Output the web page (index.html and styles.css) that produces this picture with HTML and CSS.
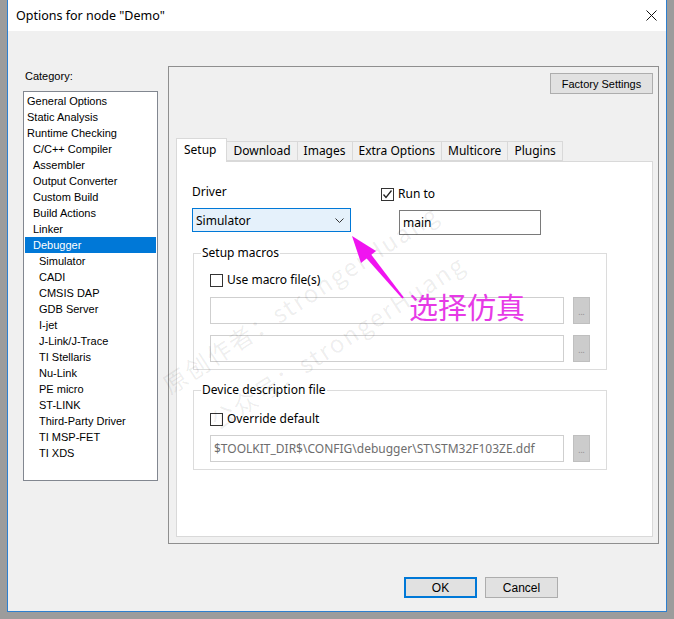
FILE: index.html
```html
<!DOCTYPE html>
<html lang="en">
<head>
  <meta charset="UTF-8" />
  <title>Options for node "Demo"</title>
  <link rel="stylesheet" href="styles.css">
</head>
<body>
  <div class="window">
    <div class="titlebar">
      <span class="title">Options for node "Demo"</span>
      <svg class="close" width="11" height="11" viewBox="0 0 11 11">
        <path d="M0.5 0.5 L10.5 10.5 M10.5 0.5 L0.5 10.5" stroke="#111" stroke-width="1" fill="none"/>
      </svg>
    </div>

    <div class="client">
      <!-- Category list -->
      <div class="category">
        <div class="category-label">Category:</div>
        <ul class="cat-list">
          <li>General Options</li>
          <li>Static Analysis</li>
          <li>Runtime Checking</li>
          <li class="lvl1">C/C++ Compiler</li>
          <li class="lvl1">Assembler</li>
          <li class="lvl1">Output Converter</li>
          <li class="lvl1">Custom Build</li>
          <li class="lvl1">Build Actions</li>
          <li class="lvl1">Linker</li>
          <li class="lvl1 selected">Debugger</li>
          <li class="lvl2">Simulator</li>
          <li class="lvl2">CADI</li>
          <li class="lvl2">CMSIS DAP</li>
          <li class="lvl2">GDB Server</li>
          <li class="lvl2">I-jet</li>
          <li class="lvl2">J-Link/J-Trace</li>
          <li class="lvl2">TI Stellaris</li>
          <li class="lvl2">Nu-Link</li>
          <li class="lvl2">PE micro</li>
          <li class="lvl2">ST-LINK</li>
          <li class="lvl2">Third-Party Driver</li>
          <li class="lvl2">TI MSP-FET</li>
          <li class="lvl2">TI XDS</li>
        </ul>
      </div>

      <div class="main">
        <div class="panel">
          <button class="win-btn factory-btn">Factory Settings</button>

          <div class="tabs">
            <div class="tab active">Setup</div>
            <div class="tab">Download</div>
            <div class="tab">Images</div>
            <div class="tab">Extra Options</div>
            <div class="tab">Multicore</div>
            <div class="tab">Plugins</div>
          </div>

          <div class="tab-page">
            <div class="driver-row">
              <div class="driver-col">
                <div class="field-label">Driver</div>
                <div class="select">
                  <span>Simulator</span>
                  <svg width="9" height="5" viewBox="0 0 9 5">
                    <path d="M0.5 0.5 L4.5 4.5 L8.5 0.5" stroke="#333" stroke-width="1" fill="none"/>
                  </svg>
                </div>
              </div>
              <div class="runto-col">
                <label class="check-row">
                  <span class="checkbox checked">
                    <svg width="11" height="11" viewBox="0 0 11 11">
                      <path d="M1.5 5.5 L4 8.5 L9.5 1.5" stroke="#222" stroke-width="1.3" fill="none"/>
                    </svg>
                  </span>
                  Run to
                </label>
                <div class="textbox">main</div>
              </div>
            </div>

            <fieldset class="group macros">
              <legend>Setup macros</legend>
              <label class="check-row">
                <span class="checkbox"></span>
                Use macro file(s)
              </label>
              <div class="file-row">
                <div class="path-box"></div>
                <div class="dots-btn">...</div>
              </div>
              <div class="file-row">
                <div class="path-box"></div>
                <div class="dots-btn">...</div>
              </div>
            </fieldset>

            <fieldset class="group device">
              <legend>Device description file</legend>
              <label class="check-row">
                <span class="checkbox"></span>
                Override default
              </label>
              <div class="file-row">
                <div class="path-box">$TOOLKIT_DIR$\CONFIG\debugger\ST\STM32F103ZE.ddf</div>
                <div class="dots-btn">...</div>
              </div>
            </fieldset>
          </div>
        </div>

        <div class="dialog-buttons">
          <button class="win-btn default">OK</button>
          <button class="win-btn">Cancel</button>
        </div>
      </div>
    </div>
  </div>

  <!-- screenshot annotations: watermark and arrow -->
  <div class="watermark wm1">原创作者：strongerHuang</div>
  <div class="watermark wm2">公众号：strongerHuang</div>
  <svg class="arrow" width="674" height="619" viewBox="0 0 674 619">
    <polygon points="370.8,254.1 366.2,257.9 402.2,298.6 403.8,297.4" fill="#f014f0"/>
    <polygon points="352,236 376,251 361,263" fill="#f014f0"/>
  </svg>
  <div class="note">选择仿真</div>
</body>
</html>
```

FILE: styles.css
```css
* {
  box-sizing: border-box;
  margin: 0;
  padding: 0;
}

html, body {
  width: 674px;
  height: 619px;
  overflow: hidden;
}

body {
  position: relative;
  background-color: #9c9c9c;
  padding-left: 7px;
  font-family: "Noto Sans", "Open Sans", sans-serif;
  font-size: 12px;
  color: #000;
}

/* Window frame */
.window {
  width: 660px;
  height: 612px;
  border: 1px solid #2d7fcf;
  border-top: none;
  background-color: #f0f0f0;
  display: flex;
  flex-direction: column;
}

.titlebar {
  height: 31px;
  background-color: #fff;
  display: flex;
  align-items: center;
  justify-content: space-between;
  padding: 0 9px 0 8px;
}

.title {
  font-size: 12.5px;
}

.client {
  flex: 1;
  display: flex;
}

/* Category */
.category {
  width: 160px;
  padding: 39px 0 0 15px;
  font-family: "Liberation Sans", Arial, sans-serif;
  font-size: 11px;
}

.category-label {
  line-height: 13px;
  padding-left: 2px;
  margin-bottom: 8px;
}

.cat-list {
  list-style: none;
  width: 135px;
  height: 390px;
  background-color: #fff;
  border: 1px solid #828790;
  padding: 1px;
}

.cat-list li {
  height: 16px;
  line-height: 16px;
  padding-left: 2px;
  white-space: nowrap;
}

.cat-list li.lvl1 { padding-left: 8px; }
.cat-list li.lvl2 { padding-left: 14px; }

.cat-list li.selected {
  background-color: #0078d7;
  color: #fff;
}

/* Right side */
.main {
  flex: 1;
  display: flex;
  flex-direction: column;
}

.panel {
  width: 491px;
  height: 478px;
  margin-top: 35px;
  border: 1px solid #8f8f8f;
  padding: 6px 5px 6px 7px;
  display: flex;
  flex-direction: column;
}

.win-btn {
  font-family: "Liberation Sans", Arial, sans-serif;
  font-size: 11px;
  background-color: #e1e1e1;
  border: 1px solid #adadad;
  color: #000;
  height: 21px;
}

.factory-btn {
  align-self: flex-end;
  width: 103px;
}

/* Tabs */
.tabs {
  display: flex;
  align-items: flex-end;
  height: 23px;
  margin-top: 44px;
  position: relative;
  z-index: 1;
}

.tab {
  height: 20px;
  line-height: 18px;
  padding: 0 6px;
  border: 1px solid #d9d9d9;
  border-left: none;
  background-color: #f0f0f0;
  font-size: 12px;
}

.tab.active {
  height: 24px;
  margin-bottom: -1px;
  line-height: 21px;
  border-left: 1px solid #d9d9d9;
  border-bottom: none;
  background-color: #fff;
  padding: 0 10px 0 7px;
}

.tab-page {
  flex: 1;
  background-color: #fff;
  border: 1px solid #d9d9d9;
  padding: 0 0 0 15px;
}

.driver-row {
  display: flex;
  padding-top: 22px;
  height: 83px;
}

.driver-col {
  width: 189px;
}

.field-label {
  line-height: 16px;
  margin-bottom: 8px;
}

.select {
  width: 159px;
  height: 24px;
  border: 1px solid #0078d7;
  background-color: #e5f1fb;
  display: flex;
  align-items: center;
  justify-content: space-between;
  padding: 0 6px 0 3px;
}

.runto-col {
  padding-top: 2px;
}

.check-row {
  display: flex;
  align-items: center;
  gap: 4px;
  line-height: 16px;
}

.checkbox {
  width: 13px;
  height: 13px;
  border: 1px solid #333;
  background-color: #fff;
  display: flex;
  align-items: center;
  justify-content: center;
}

.runto-col .textbox {
  margin: 8px 0 0 18px;
  width: 142px;
  height: 25px;
  border: 1px solid #7a7a7a;
  line-height: 23px;
  padding-left: 3px;
}

/* Group boxes */
.group {
  width: 414px;
  margin-left: 1px;
  border: 1px solid #dcdcdc;
  padding: 11px 0 7px 16px;
}

.group legend {
  margin-left: -9px;
  padding: 0 1px;
  line-height: 16px;
}

.group.device {
  margin-top: 12px;
}

.group.device .check-row {
  margin-top: 2px;
  margin-bottom: 8px;
}

.group .check-row {
  margin-bottom: 9px;
}

.file-row {
  display: flex;
  gap: 9px;
}

.file-row + .file-row {
  margin-top: 11px;
}

.path-box {
  width: 354px;
  height: 27px;
  border: 1px solid #cfcfcf;
  background-color: #fff;
  color: #6d6d6d;
  line-height: 25px;
  padding-left: 3px;
  white-space: nowrap;
  overflow: hidden;
}

.dots-btn {
  width: 17px;
  height: 27px;
  background-color: #cccccc;
  border: 1px solid #bfbfbf;
  color: #888;
  font-size: 8px;
  text-align: center;
  line-height: 27px;
}

/* Dialog buttons */
.dialog-buttons {
  display: flex;
  gap: 8px;
  padding: 33px 0 0 236px;
}

.dialog-buttons .win-btn {
  width: 73px;
  font-size: 12px;
}

.dialog-buttons .default {
  border: 2px solid #0078d7;
}

/* Annotations over the screenshot */
.watermark {
  position: absolute;
  font-family: "Noto Sans CJK SC", "Noto Sans", sans-serif;
  font-size: 24px;
  letter-spacing: 2px;
  color: rgba(0, 0, 0, 0.075);
  white-space: nowrap;
  transform-origin: 0 100%;
  transform: rotate(-33deg);
  pointer-events: none;
}

.wm1 { left: 174px; top: 366px; }
.wm2 { left: 222px; top: 402px; }

.arrow {
  position: absolute;
  left: 0;
  top: 0;
  pointer-events: none;
}

.note {
  position: absolute;
  left: 409px;
  top: 288px;
  font-family: "Noto Sans CJK SC", sans-serif;
  font-size: 29px;
  line-height: 36px;
  color: #e63ae6;
}
```
